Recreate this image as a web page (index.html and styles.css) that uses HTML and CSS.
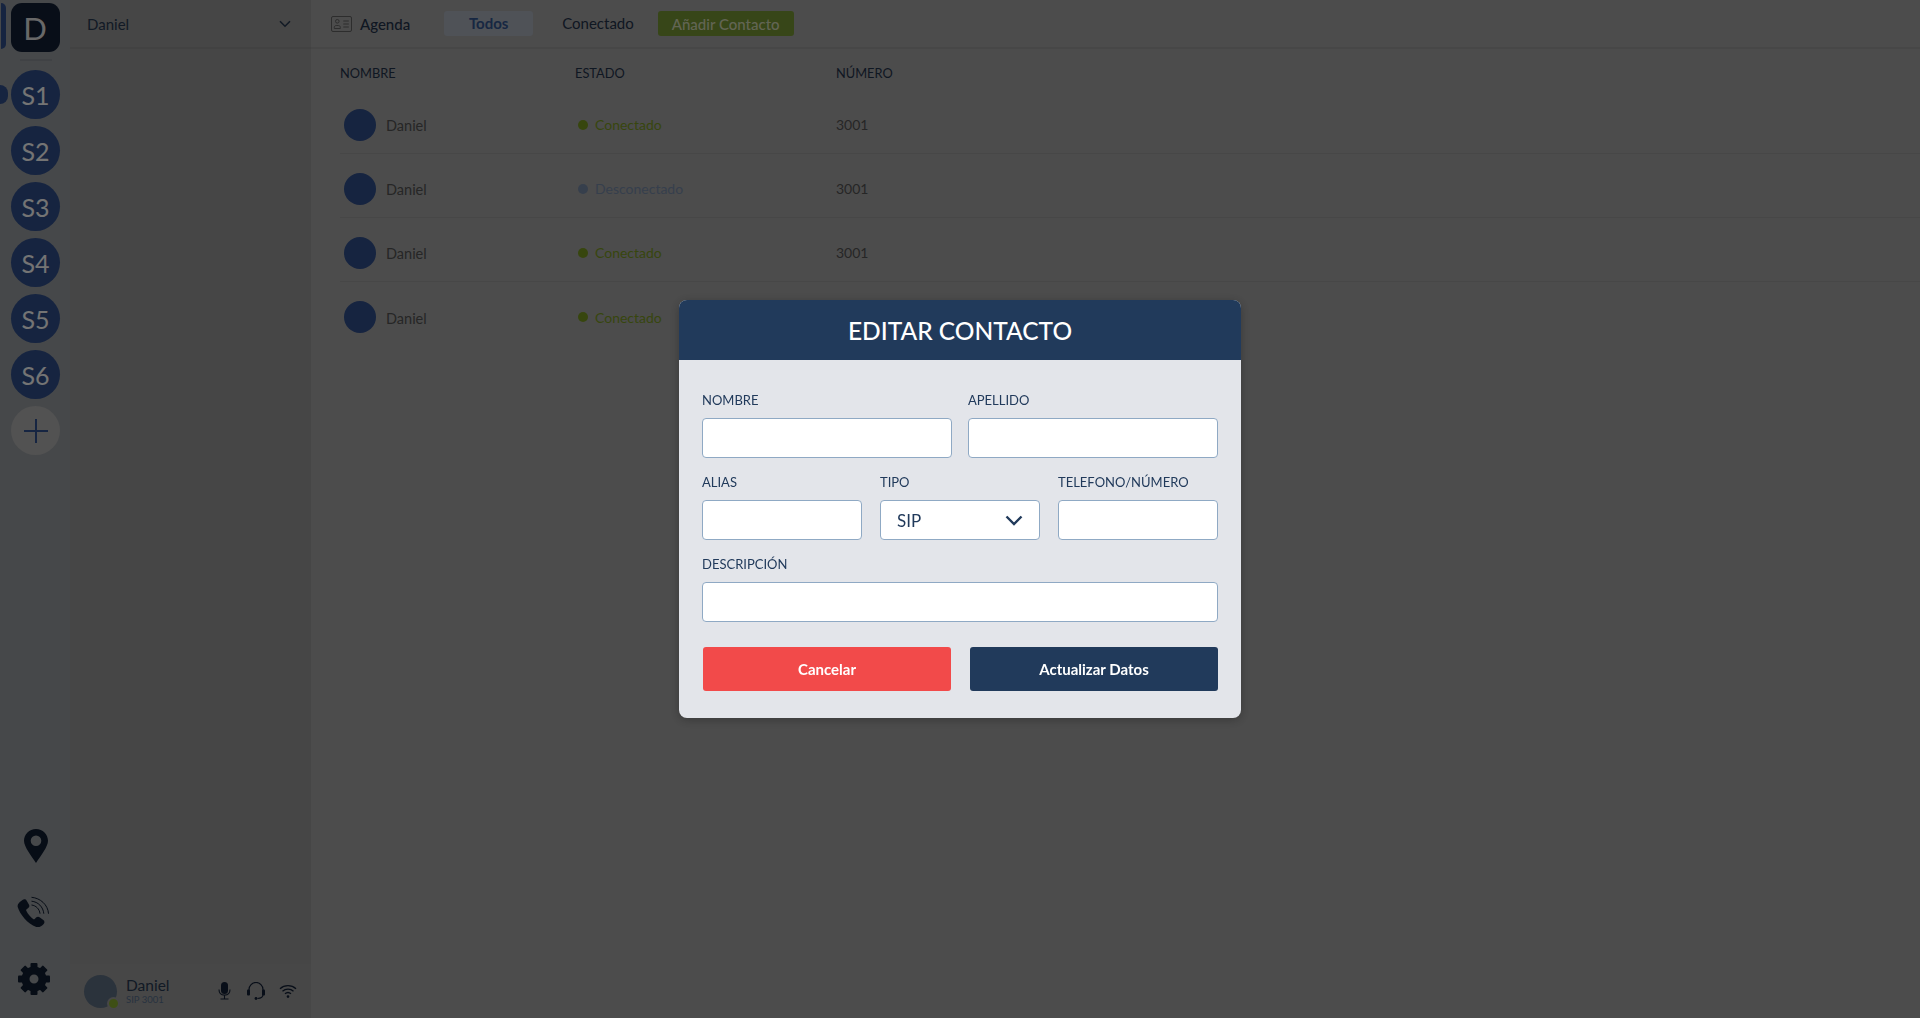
FILE: index.html
```html
<!DOCTYPE html>
<html lang="es">
<head>
    <meta charset="UTF-8">
    <meta name="viewport" content="width=device-width, initial-scale=1.0">
    <title>Agenda</title>
    <link rel="stylesheet" href="styles.css">
</head>
<body>
    <div class="app">
        <nav class="sidebar">
            <div class="server_list">
                <div class="server_home">D</div>
                <div class="server_sep"></div>
                <div class="server active">S1</div>
                <div class="server">S2</div>
                <div class="server">S3</div>
                <div class="server">S4</div>
                <div class="server">S5</div>
                <div class="server">S6</div>
                <div class="server server_add">
                    <svg width="26" height="26" viewBox="0 0 26 26"><path d="M13 1v24M1 13h24" stroke="currentColor" stroke-width="2" fill="none"/></svg>
                </div>
            </div>
            <div class="side_tools">
                <svg class="pin" width="24" height="34" viewBox="0 0 24 34"><path fill-rule="evenodd" fill="currentColor" d="M12 0C5.2 0 0 5.2 0 11.8 0 18 7.5 27 12 34c4.500-7 12-16 12-22.200C24 5.200 18.800 0 12 0zm0 6.500a5.300 5.300 0 1 1 0 10.600 5.300 5.300 0 0 1 0-10.600z"/></svg>
                <svg class="phone" width="33" height="33" viewBox="0 0 33 33">
                    <path fill="currentColor" d="M5.500 4c1.500-1.100 3.300-.8 4.200.7l2.200 3.800c.8 1.400.5 2.700-.7 3.600l-1.500 1.100c-.6.400-.7 1-.4 1.600 1.700 3.400 3.900 6 6.800 8.200.6.400 1.100.4 1.600-.1l1.400-1.300c1.100-1 2.500-1.100 3.800-.2l3.400 2.500c1.400 1 1.500 2.700.4 4-1.900 2.300-4.700 3.800-7.400 3C10.500 28 2.700 17.800.8 11.200 0 8.300 2.700 5.800 5.500 4z"/>
                    <path fill="none" stroke="currentColor" stroke-width="1" d="M14.500 9c4.500.5 8 4 8.500 8.700M14.500 5.200c6.600.6 11.700 5.700 12.300 12.500M14.500 1.300c8.800.7 16.500 7.500 17 16.400"/>
                </svg>
                <svg class="gear" width="32" height="32" viewBox="0 0 32 32">
                    <g fill="currentColor">
                        <rect x="12.500" y="0" width="7" height="7" rx="1"/>
                        <rect x="12.500" y="0" width="7" height="7" rx="1" transform="rotate(45 16 16)"/>
                        <rect x="12.500" y="0" width="7" height="7" rx="1" transform="rotate(90 16 16)"/>
                        <rect x="12.500" y="0" width="7" height="7" rx="1" transform="rotate(135 16 16)"/>
                        <rect x="12.500" y="0" width="7" height="7" rx="1" transform="rotate(180 16 16)"/>
                        <rect x="12.500" y="0" width="7" height="7" rx="1" transform="rotate(225 16 16)"/>
                        <rect x="12.500" y="0" width="7" height="7" rx="1" transform="rotate(270 16 16)"/>
                        <rect x="12.500" y="0" width="7" height="7" rx="1" transform="rotate(315 16 16)"/>
                    </g>
                    <circle cx="16" cy="16" r="8.500" fill="none" stroke="currentColor" stroke-width="8"/>
                </svg>
            </div>
        </nav>

        <aside class="panel">
            <div class="panel_head">
                <span>Daniel</span>
                <svg width="12" height="8" viewBox="0 0 12 8"><path d="M1 1.200l5 5 5-5" fill="none" stroke="currentColor" stroke-width="1.600"/></svg>
            </div>
            <div class="user_bar">
                <div class="user_avatar"><span class="user_status"></span></div>
                <div class="user_info">
                    <div class="user_name">Daniel</div>
                    <div class="user_sip">SIP 3001</div>
                </div>
                <div class="user_icons">
                    <svg class="mic" width="13" height="18" viewBox="0 0 13 18">
                        <rect x="3" y="0" width="7" height="12" rx="3.500" fill="currentColor"/>
                        <path d="M1 7.500c0 3.400 2.300 5.600 5.500 5.600s5.500-2.200 5.500-5.600M6.500 13v4M2.500 17h8" fill="none" stroke="currentColor" stroke-width="1.100"/>
                    </svg>
                    <svg width="18" height="18" viewBox="0 0 18 18">
                        <path d="M2 10V7.500a7 7 0 0 1 14 0V10M16 12.500c0 2.400-2.200 3.800-5.500 4" fill="none" stroke="currentColor" stroke-width="1.200"/>
                        <rect x="0" y="7.500" width="3" height="6" rx="1" fill="currentColor"/>
                        <rect x="15" y="7.500" width="3" height="6" rx="1" fill="currentColor"/>
                        <circle cx="9" cy="16.500" r="1.400" fill="currentColor"/>
                    </svg>
                    <svg width="18" height="14" viewBox="0 0 18 14">
                        <path d="M1 4.800c4.500-4.200 11.500-4.200 16 0M3.500 7.300c3.100-2.800 7.900-2.800 11 0M6 9.800c1.700-1.500 4.300-1.500 6 0" fill="none" stroke="currentColor" stroke-width="1.300"/>
                        <circle cx="9" cy="12.600" r="1.300" fill="currentColor"/>
                    </svg>
                </div>
            </div>
        </aside>

        <main class="content">
            <div class="toolbar">
                <svg class="agenda_icon" width="21" height="16" viewBox="0 0 21 16">
                    <rect x="0.500" y="0.500" width="20" height="15" rx="1.500" fill="none" stroke="currentColor"/>
                    <circle cx="6.300" cy="5.300" r="1.800" fill="none" stroke="currentColor"/>
                    <path d="M3.300 12.500v-1.200c0-1.100.9-1.800 1.900-1.800h2.200c1 0 1.900.7 1.900 1.800v1.200zM12.300 5h5.500M12.300 8h5.500M12.300 11h5.500" fill="none" stroke="currentColor"/>
                </svg>
                <span class="toolbar_title">Agenda</span>
                <a class="tab tab_active">Todos</a>
                <a class="tab">Conectado</a>
                <a class="add_btn">Añadir Contacto</a>
            </div>

            <div class="list_head">
                <span>NOMBRE</span>
                <span>ESTADO</span>
                <span>NÚMERO</span>
            </div>
            <div class="row">
                <div class="row_name"><span class="avatar"></span><span class="row_text">Daniel</span></div>
                <div class="state online"><span class="dot"></span>Conectado</div>
                <div class="num">3001</div>
            </div>
            <div class="row">
                <div class="row_name"><span class="avatar"></span><span class="row_text">Daniel</span></div>
                <div class="state offline"><span class="dot"></span>Desconectado</div>
                <div class="num">3001</div>
            </div>
            <div class="row">
                <div class="row_name"><span class="avatar"></span><span class="row_text">Daniel</span></div>
                <div class="state online"><span class="dot"></span>Conectado</div>
                <div class="num">3001</div>
            </div>
            <div class="row">
                <div class="row_name"><span class="avatar"></span><span class="row_text">Daniel</span></div>
                <div class="state online"><span class="dot"></span>Conectado</div>
            </div>
        </main>
    </div>

    <div class="overlay">
        <form class="modal">
            <h2 class="modal_title">EDITAR CONTACTO</h2>
            <div class="modal_body">
                <div class="form_row two">
                    <label class="field">NOMBRE<input type="text"></label>
                    <label class="field">APELLIDO<input type="text"></label>
                </div>
                <div class="form_row three">
                    <label class="field">ALIAS<input type="text"></label>
                    <label class="field">TIPO
                        <span class="select"><span class="select_val">SIP</span>
                            <svg width="18" height="11" viewBox="0 0 18 11"><path d="M1.500 1.500L9 9l7.500-7.500" fill="none" stroke="currentColor" stroke-width="2.400"/></svg>
                        </span>
                    </label>
                    <label class="field">TELEFONO/NÚMERO<input type="text"></label>
                </div>
                <div class="form_row">
                    <label class="field">DESCRIPCIÓN<input type="text"></label>
                </div>
                <div class="modal_btns">
                    <button type="button" class="btn btn_cancel">Cancelar</button>
                    <button type="button" class="btn btn_save">Actualizar Datos</button>
                </div>
            </div>
        </form>
    </div>
</body>
</html>
```

FILE: styles.css
```css
* {
    box-sizing: border-box;
}

body {
    font-family: Lato, "Open Sans", sans-serif;
    margin: 0;
    height: 1018px;
    overflow: hidden;
    background-color: #989898;
}

.app {
    display: flex;
    height: 100%;
}

/* left column */
.sidebar {
    width: 70px;
    flex: none;
    display: flex;
    flex-direction: column;
    justify-content: space-between;
    background-color: #8c9094;
    color: #0e1a2c;
}

.server_list {
    display: flex;
    flex-direction: column;
    align-items: center;
    padding: 3px 0 0 1px;
    gap: 7px;
}

.server_home {
    position: relative;
    width: 49px;
    height: 49px;
    margin-left: -1px;
    border-radius: 11px;
    background-color: #101c30;
    color: #d0d0d0;
    font-size: 31px;
    line-height: 50px;
    text-align: center;
}

.server_home::before {
    content: "";
    position: absolute;
    left: -10px;
    top: 0;
    width: 5px;
    height: 46px;
    border-radius: 0 6px 6px 0;
    background-color: #2c4880;
}

.server_sep {
    width: 32px;
    height: 2px;
    margin: 0 0 2px;
    background-color: #80848a;
}

.server {
    position: relative;
    width: 49px;
    height: 49px;
    border-radius: 50%;
    background-color: #2c4880;
    color: #e8e8e8;
    font-size: 25px;
    line-height: 51px;
    text-align: center;
}

.server.active::before {
    content: "";
    position: absolute;
    left: -11px;
    top: 15px;
    width: 8px;
    height: 19px;
    border-radius: 0 10px 10px 0;
    background-color: #2c4880;
}

.server_add {
    display: flex;
    align-items: center;
    justify-content: center;
    background-color: #a4a4a4;
    color: #2c4a84;
}

.side_tools {
    display: flex;
    flex-direction: column;
    align-items: center;
    padding: 0 0 23px;
}

.pin {
    margin: 0 0 33px 1px;
}

.phone {
    margin-bottom: 34px;
    margin-left: -3px;
}

.gear {
    margin-left: -3px;
}

/* second column */
.panel {
    width: 241px;
    flex: none;
    display: flex;
    flex-direction: column;
    justify-content: space-between;
    background-color: #8c8c8c;
    color: #24344a;
}

.panel_head {
    height: 49px;
    display: flex;
    align-items: center;
    justify-content: space-between;
    padding: 0 20px 0 17px;
    font-size: 15px;
    border-bottom: 2px solid #848484;
}

.user_bar {
    height: 54px;
    display: flex;
    align-items: center;
    padding: 0 14px;
    background-color: #8e8e8e;
}

.user_avatar {
    position: relative;
    width: 33px;
    height: 33px;
    border-radius: 50%;
    background-color: #566678;
}

.user_status {
    position: absolute;
    right: -3px;
    bottom: -2px;
    width: 13px;
    height: 13px;
    border-radius: 50%;
    border: 2px solid #8e8e8e;
    background-color: #7d9e2a;
}

.user_info {
    margin-left: 9px;
    flex: 1;
}

.user_name {
    font-size: 15.5px;
    line-height: 18px;
}

.user_sip {
    font-size: 9.5px;
    line-height: 12px;
    color: #4f6580;
}

.user_icons {
    display: flex;
    align-items: center;
    gap: 14px;
    color: #101c30;
}

.mic {
    margin-right: 2px;
}

/* contact list */
.content {
    flex: 1;
    background-color: #989898;
    color: #4c4c4c;
}

.toolbar {
    height: 49px;
    display: flex;
    align-items: center;
    padding: 0 0 0 20px;
    border-bottom: 2px solid #8e8e8e;
    font-size: 15px;
    color: #1e2e44;
}

.agenda_icon {
    color: #5a5a5a;
}

.toolbar_title {
    margin: 0 34px 0 8px;
    font-weight: 500;
}

.tab {
    display: block;
    height: 25px;
    line-height: 25px;
    text-align: center;
    margin-right: 29px;
    border-radius: 3px;
}

.tab_active {
    width: 89px;
    background-color: #9ea4ae;
    color: #2f4f85;
    font-weight: 700;
}

.add_btn {
    display: block;
    height: 25px;
    line-height: 27px;
    margin-left: -5px;
    padding: 0 14px;
    border-radius: 3px;
    background-color: #6f8c30;
    color: #c4caa8;
    font-weight: 500;
}

.list_head, .row {
    display: grid;
    grid-template-columns: 235px 261px 1fr;
    margin-left: 29px;
    align-items: center;
}

.list_head {
    height: 47px;
    font-size: 12.8px;
    color: #1e2e44;
}

.row {
    height: 58px;
    margin-bottom: 6px;
    font-size: 14px;
    border-bottom: 1px solid #8e8e8e;
}

.row:last-child {
    border-bottom: none;
}

.row_name {
    display: flex;
    align-items: center;
    gap: 10px;
    padding-left: 4px;
    font-size: 14.5px;
    color: #4c4c4c;
}

.row_text {
    padding-top: 2px;
}

.avatar {
    width: 32px;
    height: 32px;
    border-radius: 50%;
    background-color: #2c4880;
}

.state {
    display: flex;
    align-items: center;
    justify-self: start;
    gap: 7px;
    padding-left: 3px;
}

.dot {
    width: 10px;
    height: 10px;
    border-radius: 50%;
    background-color: currentColor;
}

.online {
    color: #6f8c1c;
}

.offline {
    color: #6c7e98;
}

/* modal */
.overlay {
    position: fixed;
    top: 0;
    left: 0;
    right: 0;
    bottom: 0;
    display: flex;
    align-items: center;
    justify-content: center;
    background-color: rgba(0, 0, 0, 0.5);
}

.modal {
    width: 562px;
    height: 418px;
    border-radius: 8px;
    overflow: hidden;
    background-color: #e3e5ea;
    color: #213a5b;
    box-shadow: 0 2px 10px rgba(0, 0, 0, 0.25);
}

.modal_title {
    margin: 0;
    height: 60px;
    line-height: 62px;
    text-align: center;
    font-size: 24.5px;
    font-weight: 500;
    color: white;
    background-color: #213a5b;
}

.modal_body {
    padding: 31px 23px 0;
}

.form_row {
    display: grid;
    margin-bottom: 15px;
}

.form_row.two {
    grid-template-columns: 1fr 1fr;
    gap: 16px;
}

.form_row.three {
    grid-template-columns: 160px 160px 160px;
    gap: 18px;
}

.field {
    display: block;
    font-size: 13px;
    line-height: 18px;
}

.field input, .select {
    display: flex;
    align-items: center;
    justify-content: space-between;
    width: 100%;
    height: 40px;
    margin-top: 9px;
    padding: 0 16px;
    font-family: inherit;
    font-size: 17px;
    color: #213a5b;
    background-color: white;
    border: 1px solid #8fa9c4;
    border-radius: 4px;
}

.select_val {
    padding-top: 2px;
}

.modal_btns {
    display: grid;
    grid-template-columns: 248px 248px;
    justify-content: space-between;
    padding: 10px 0 0 1px;
}

.btn {
    height: 44px;
    border: none;
    border-radius: 3px;
    font-family: inherit;
    font-size: 15px;
    font-weight: 700;
    color: white;
}

.btn_cancel {
    background-color: #f24a4a;
}

.btn_save {
    background-color: #213a5b;
}
```
